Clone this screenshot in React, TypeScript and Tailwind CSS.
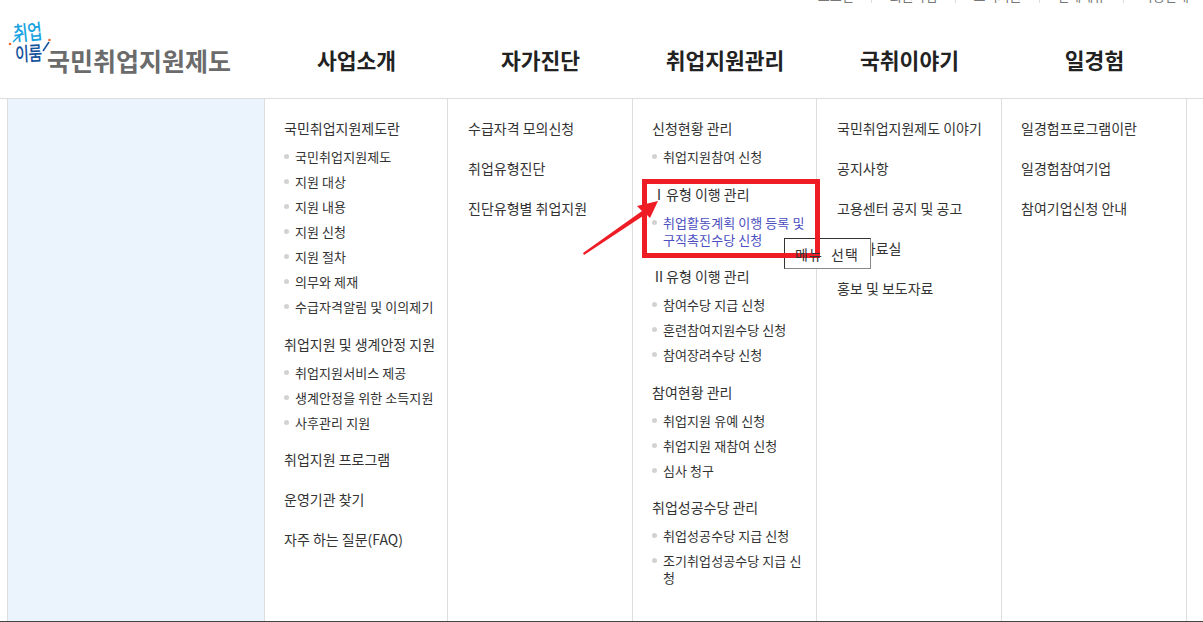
const font = "font-['Noto_Sans_CJK_KR','Noto_Sans',sans-serif]";

type Item = { text: string[]; active?: boolean };
type Group = { title: string; items?: Item[] };
const it = (...text: string[]): Item => ({ text });

const columns: { width: string; pad: string; groups: Group[] }[] = [
  {
    width: "w-[183px]",
    pad: "pl-[19px]",
    groups: [
      {
        title: "국민취업지원제도란",
        items: [
          it("국민취업지원제도"),
          it("지원 대상"),
          it("지원 내용"),
          it("지원 신청"),
          it("지원 절차"),
          it("의무와 제재"),
          it("수급자격알림 및 이의제기"),
        ],
      },
      {
        title: "취업지원 및 생계안정 지원",
        items: [it("취업지원서비스 제공"), it("생계안정을 위한 소득지원"), it("사후관리 지원")],
      },
      { title: "취업지원 프로그램" },
      { title: "운영기관 찾기" },
      { title: "자주 하는 질문(FAQ)" },
    ],
  },
  {
    width: "w-[185px]",
    pad: "pl-5",
    groups: [{ title: "수급자격 모의신청" }, { title: "취업유형진단" }, { title: "진단유형별 취업지원" }],
  },
  {
    width: "w-[184px]",
    pad: "pl-[19px]",
    groups: [
      { title: "신청현황 관리", items: [it("취업지원참여 신청")] },
      {
        title: "Ⅰ유형 이행 관리",
        items: [{ text: ["취업활동계획 이행 등록 및", "구직촉진수당 신청"], active: true }],
      },
      {
        title: "Ⅱ유형 이행 관리",
        items: [it("참여수당 지급 신청"), it("훈련참여지원수당 신청"), it("참여장려수당 신청")],
      },
      {
        title: "참여현황 관리",
        items: [it("취업지원 유예 신청"), it("취업지원 재참여 신청"), it("심사 청구")],
      },
      {
        title: "취업성공수당 관리",
        items: [it("취업성공수당 지급 신청"), it("조기취업성공수당 지급 신", "청")],
      },
    ],
  },
  {
    width: "w-[185px]",
    pad: "pl-5",
    groups: [
      { title: "국민취업지원제도 이야기" },
      { title: "공지사항" },
      { title: "고용센터 공지 및 공고" },
      { title: "참고자료실" },
      { title: "홍보 및 보도자료" },
    ],
  },
  {
    width: "w-[185px]",
    pad: "pl-[19px]",
    groups: [{ title: "일경험프로그램이란" }, { title: "일경험참여기업" }, { title: "참여기업신청 안내" }],
  },
];

const nav = [
  { label: "사업소개", width: "w-[183px]" },
  { label: "자가진단", width: "w-[185px]" },
  { label: "취업지원관리", width: "w-[184px]" },
  { label: "국취이야기", width: "w-[185px]" },
  { label: "일경험", width: "w-[185px]" },
];

const topLinks = ["로그인", "회원가입", "고객지원", "전체메뉴", "사용안내"];

function Logo() {
  return (
    <div className="relative h-full w-[264px] shrink-0">
      <span className="absolute left-[13px] top-[17px] -rotate-6 scale-y-[1.3] text-[16px] font-medium leading-[20px] tracking-[-0.5px] text-[#19a3e0]">
        취업
      </span>
      <span className="absolute left-[15px] top-[39px] -rotate-3 scale-y-[1.3] text-[15px] font-medium leading-[20px] tracking-[-0.5px] text-[#14529c]">
        이룸
      </span>
      <svg className="absolute left-0 top-0" width="60" height="70" viewBox="0 0 60 70" fill="none">
        <path d="M13 38 L23 28" stroke="#19a3e0" strokeWidth="1.5" />
        <circle cx="10" cy="40" r="1.3" fill="#ee6a2c" />
        <path d="M43 47 L49 38" stroke="#14529c" strokeWidth="1.5" />
        <circle cx="49.5" cy="36" r="1.3" fill="#ee6a2c" />
      </svg>
      <span className="absolute left-[47px] top-[38px] whitespace-nowrap text-[25px] font-bold leading-[36px] text-[#6b6b6b]">
        국민취업지원제도
      </span>
    </div>
  );
}

function Column({ col }: { col: (typeof columns)[number] }) {
  return (
    <div className={`${col.width} ${col.pad} shrink-0 border-l border-[#dddddd] pt-[19px]`}>
      {col.groups.map((g) => (
        <div key={g.title} className={g.items ? "mb-[14.5px]" : "mb-5"}>
          <div className="h-5 whitespace-nowrap text-[14px] leading-5 text-[#333333]">{g.title}</div>
          {g.items && (
            <ul className="pt-[6px]">
              {g.items.map((item) => (
                <li
                  key={item.text[0]}
                  className={`relative whitespace-nowrap py-1 pl-[11px] text-[13px] leading-[17px] tracking-[0.08px] ${
                    item.active ? "text-[#4b4fc0]" : "text-[#333333]"
                  }`}
                >
                  <span className="absolute left-0 top-[10px] h-[5px] w-[5px] rounded-full bg-[#d2d2d2]" />
                  {item.text.map((t) => (
                    <div key={t}>{t}</div>
                  ))}
                </li>
              ))}
            </ul>
          )}
        </div>
      ))}
    </div>
  );
}

export default function App() {
  return (
    <div className={`${font} relative h-[622px] w-[1203px] overflow-hidden bg-white`}>
      <div className="flex h-[4px] items-end justify-end gap-[17.5px] overflow-hidden pr-[14px] text-[13px] leading-[16px] text-[#777777]">
        {topLinks.map((t, i) => (
          <div key={t} className="flex items-end gap-[17.5px]">
            {i > 0 && <span className="mb-[1px] h-[3px] w-px bg-[#dddddd]" />}
            <span>{t}</span>
          </div>
        ))}
      </div>

      <header className="flex h-[95px] items-center border-b border-[#dddddd]">
        <Logo />
        {nav.map((n) => (
          <div
            key={n.label}
            className={`${n.width} shrink-0 pl-[2px] pt-[18px] text-center text-[21.5px] font-bold leading-[30px] text-[#222222]`}
          >
            {n.label}
          </div>
        ))}
      </header>

      <div className="flex h-[522px]">
        <div className="w-[7px] shrink-0" />
        <div className="w-[257px] shrink-0 border-l border-[#dddddd] bg-[#ebf3fd]" />
        {columns.map((c, i) => (
          <Column key={i} col={c} />
        ))}
        <div className="border-l border-[#dddddd]" />
      </div>
      <div className="h-px bg-[#444444]" />

      {/* tooltip */}
      <div className="absolute left-[784px] top-[238px] h-[31px] w-[87px] border border-b-[#888888] border-l-[#333333] border-r-[#888888] border-t-[#333333] bg-white" />
      {/* annotation box */}
      <div className="absolute left-[642px] top-[179px] h-[79px] w-[178px] border-[5px] border-[#ee1c25]" />
      <svg className="absolute left-[575px] top-[190px]" width="90" height="70" viewBox="0 0 90 70" fill="none">
        <path d="M8 63 L67 21 L62 16 L83 11 L75 28 L71 24 L9 65 Z" fill="#ee1c25" />
      </svg>
      <div className="absolute left-[795px] top-[244px] whitespace-nowrap text-[14px] leading-5 tracking-[1px] text-[#333333]">
        메뉴&nbsp;&nbsp;선택
      </div>
    </div>
  );
}
